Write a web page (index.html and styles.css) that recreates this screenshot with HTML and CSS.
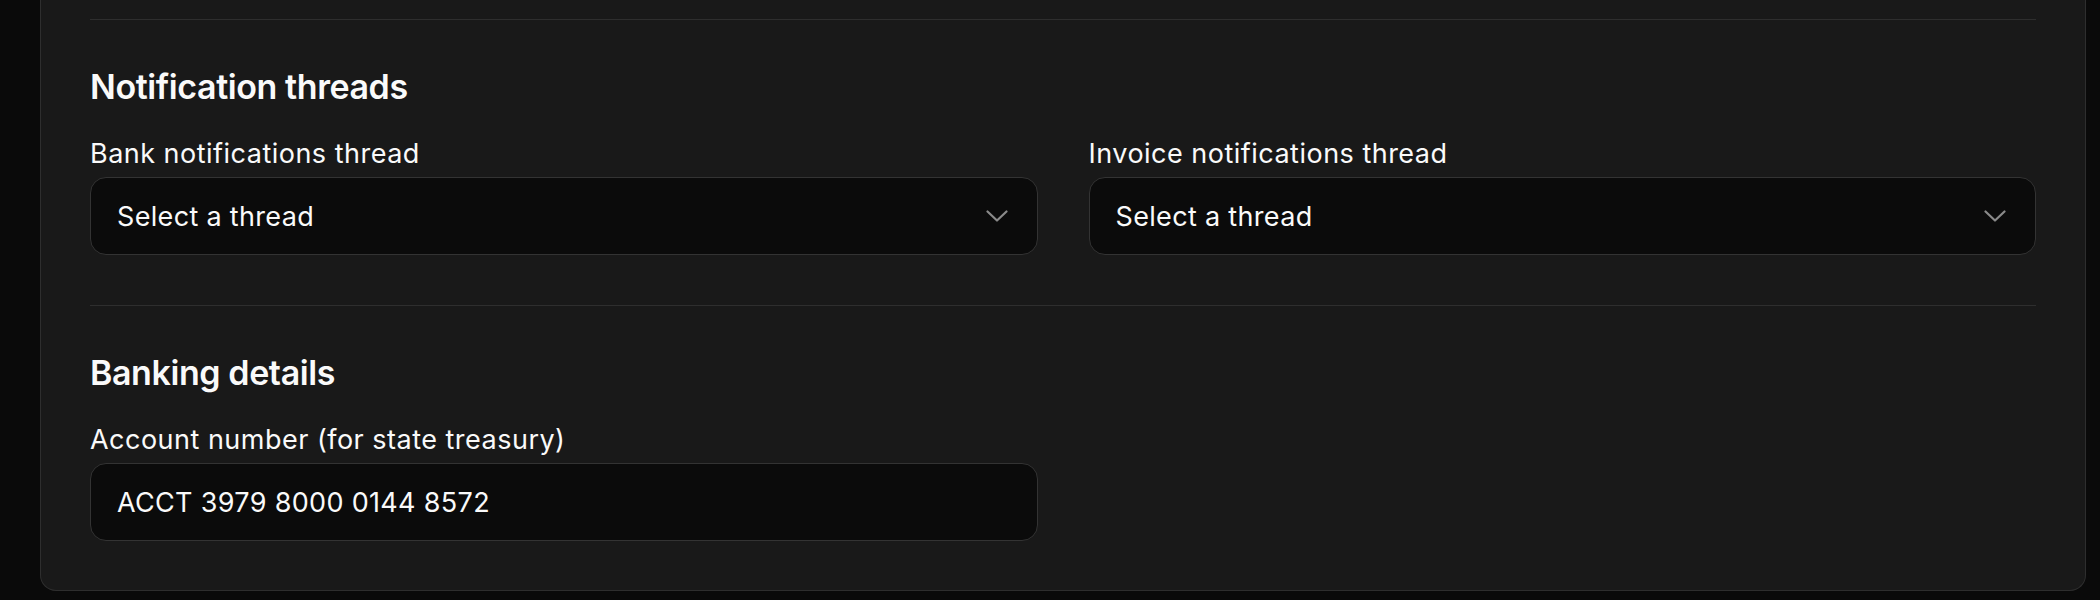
FILE: index.html
```html
<!DOCTYPE html>
<html lang="en">
<head>
  <meta charset="UTF-8">
  <meta name="viewport" content="width=device-width, initial-scale=1.0">
  <title>Settings</title>
  <link rel="stylesheet" href="styles.css">
</head>
<body>

<div class="page">
  <div class="card">
    <hr class="divider">

    <!-- Notification threads -->
    <section class="section">
      <h2>Notification threads</h2>
      <div class="field-row">
        <div class="field">
          <label for="bankThread">Bank notifications thread</label>
          <button type="button" id="bankThread" class="select-trigger">
            <span>Select a thread</span>
            <svg class="chevron" width="22" height="12" viewBox="0 0 22 12"><path d="M1.5 1.5 11 10.5 20.5 1.5" fill="none" stroke="currentColor" stroke-width="2.2" stroke-linecap="round" stroke-linejoin="round"/></svg>
          </button>
        </div>
        <div class="field">
          <label for="invoiceThread">Invoice notifications thread</label>
          <button type="button" id="invoiceThread" class="select-trigger">
            <span>Select a thread</span>
            <svg class="chevron" width="22" height="12" viewBox="0 0 22 12"><path d="M1.5 1.5 11 10.5 20.5 1.5" fill="none" stroke="currentColor" stroke-width="2.2" stroke-linecap="round" stroke-linejoin="round"/></svg>
          </button>
        </div>
      </div>
    </section>

    <hr class="divider">

    <!-- Banking details -->
    <section class="section last">
      <h2>Banking details</h2>
      <div class="field-row">
        <div class="field">
          <label for="account">Account number (for state treasury)</label>
          <input type="text" id="account" class="text-input" value="ACCT 3979 8000 0144 8572">
        </div>
      </div>
    </section>
  </div>
</div>

</body>
</html>
```

FILE: styles.css
```css
html, body {
  margin: 0;
  background-color: #0a0a0a;
  color: #fafafa;
  font-family: Inter, "Noto Sans", sans-serif;
}
.page {
  padding: 0 14px 8px 40px;
}
.card {
  background-color: #191919;
  border: 1px solid #2e2e2e;
  border-top: none;
  border-radius: 0 0 16px 16px;
  padding: 19px 49px 49px;
}
.divider {
  border: none;
  border-top: 1px solid #2e2e2e;
  margin: 0;
}
.section {
  padding: 47px 0 50px;
}
.section.last {
  padding-bottom: 0;
}
h2 {
  margin: 0 0 31px;
  font-size: 34px;
  line-height: 40px;
  font-weight: 600;
  letter-spacing: -0.012em;
}
.field-row {
  display: grid;
  grid-template-columns: 1fr 1fr;
  gap: 51px;
}
.field {
  display: flex;
  flex-direction: column;
  gap: 7px;
}
label {
  font-size: 27px;
  line-height: 32px;
  letter-spacing: 0.018em;
}
.select-trigger, .text-input {
  box-sizing: border-box;
  height: 78px;
  width: 100%;
  background-color: #0b0b0b;
  border: 1px solid #333333;
  border-radius: 16px;
  color: #fafafa;
  font-family: inherit;
  font-size: 27px;
  letter-spacing: 0.012em;
  padding: 0 29px 0 26px;
  margin: 0;
}
.select-trigger {
  display: flex;
  align-items: center;
  justify-content: space-between;
  text-align: left;
}
.chevron {
  color: #8a8a8a;
}
.text-input {
  outline: none;
}
```
